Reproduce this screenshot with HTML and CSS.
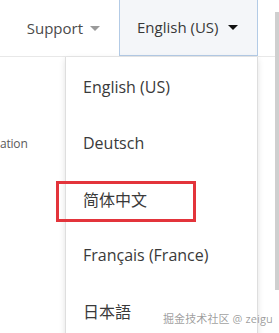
FILE: index.html
```html
<!DOCTYPE html>
<html lang="en">
<head>
<meta charset="utf-8">
<title>Language menu</title>
<link rel="stylesheet" href="styles.css">
</head>
<body>
<div class="page">
  <header class="topbar">
    <div class="nav-item">
      <span class="nav-label">Support</span>
      <span class="caret caret-muted"></span>
    </div>
    <div class="lang-button">
      <span class="lang-label">English (US)</span>
      <span class="caret caret-dark"></span>
    </div>
  </header>
  <main class="content">
    <p class="side-text">ation</p>
  </main>
  <ul class="lang-menu">
    <li class="lang-item">English (US)</li>
    <li class="lang-item">Deutsch</li>
    <li class="lang-item highlighted">简体中文<span class="mark-box"></span></li>
    <li class="lang-item">Français (France)</li>
    <li class="lang-item">日本語</li>
  </ul>
  <div class="scroll-strip"></div>
  <div class="watermark">掘金技术社区 @ zeigu</div>
</div>
</body>
</html>
```
FILE: styles.css
```css
* { box-sizing: border-box; }
html, body {
  margin: 0;
  padding: 0;
  background: #ffffff;
}
body {
  font-family: "Open Sans", "Noto Sans CJK SC", sans-serif;
  color: #3a3a3a;
}
.page {
  position: relative;
  width: 279px;
  height: 333px;
  overflow: hidden;
}
.topbar {
  display: flex;
  justify-content: flex-end;
  align-items: stretch;
  height: 57px;
  padding-right: 21px;
  border-bottom: 1px solid #e8e8e8;
}
.nav-item {
  display: flex;
  align-items: center;
  gap: 7px;
  padding-right: 19px;
  padding-bottom: 1px;
  font-size: 15px;
  color: #4a4a4a;
}
.caret {
  width: 0;
  height: 0;
  border-left: 5px solid transparent;
  border-right: 5px solid transparent;
  border-top: 5px solid #999999;
  margin-top: 1px;
}
.caret-muted { border-top-color: #9a9a9a; }
.caret-dark { border-top-color: #111111; }
.lang-button {
  display: flex;
  align-items: center;
  gap: 9px;
  width: 139px;
  padding-left: 17px;
  padding-bottom: 1px;
  border: 1px solid #b3cbe6;
  border-top: none;
  background: #f4f6f9;
  font-size: 15px;
  color: #383838;
}
.content {
  padding-top: 78px;
}
.side-text {
  margin: 0;
  font-size: 12px;
  letter-spacing: -0.2px;
  color: #5a5a5a;
}
.lang-menu {
  position: absolute;
  left: 65px;
  top: 57px;
  width: 193px;
  height: 300px;
  margin: 0;
  padding: 2px 0 0 0;
  list-style: none;
  background: #ffffff;
  border: 1px solid #dedede;
  border-top: none;
  box-shadow: 0 2px 6px rgba(0, 0, 0, 0.12);
}
.lang-item {
  position: relative;
  display: flex;
  align-items: center;
  height: 56px;
  padding-left: 17px;
  font-size: 16px;
  color: #3a3a3a;
}
.mark-box {
  position: absolute;
  left: -10px;
  top: 10px;
  width: 140px;
  height: 41px;
  border: 3px solid #e3343b;
}
.scroll-strip {
  position: absolute;
  right: 0;
  top: 12px;
  width: 4px;
  height: 278px;
  background: #cfcfcf;
}
.watermark {
  position: absolute;
  left: 163px;
  top: 310px;
  font-size: 11px;
  letter-spacing: 0.1px;
  color: rgba(90, 90, 90, 0.6);
  white-space: nowrap;
}
```
